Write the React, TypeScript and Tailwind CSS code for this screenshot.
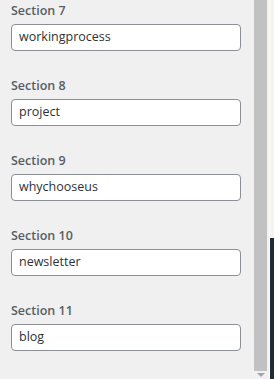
import React from "react";

const sections = [
  { label: "Section 7", value: "workingprocess" },
  { label: "Section 8", value: "project" },
  { label: "Section 9", value: "whychooseus" },
  { label: "Section 10", value: "newsletter" },
  { label: "Section 11", value: "blog" },
];

export default function App() {
  return (
    <div className="flex h-screen w-full overflow-hidden bg-[#f0f0f1]" style={{ fontFamily: '"Open Sans", "Noto Sans", sans-serif' }}>
      <div className="flex-1 pl-[11px] pr-[11px] pt-[1px]">
        {sections.map((s) => (
          <div key={s.label} className="mb-[25px]">
            <div className="h-[20px] text-[12.5px] font-semibold leading-[20px] text-[#575e65]">{s.label}</div>
            <div className="mt-[3px] flex h-[27px] w-[230px] items-center rounded-[4px] border border-[#8c8f94] bg-white pl-[7px] text-[12.5px] text-[#2c3338]">
              {s.value}
            </div>
          </div>
        ))}
      </div>
      <div className="relative flex w-[17px] flex-col bg-[#f1f1f1]">
        <div className="mx-[2px] h-[371px] bg-[#c1c1c1]" />
        <div className="flex flex-1 items-center justify-center">
          <div className="h-0 w-0 border-x-[4px] border-t-[4px] border-x-transparent border-t-[#a3a3a3]" />
        </div>
      </div>
      <div className="w-[1px] bg-[#fbfbfb]" />
      <div className="flex w-[4px] flex-col">
        <div className="h-[238px] bg-[#f6f3ee]" />
        <div className="flex-1 bg-[#1d2b36]" />
      </div>
    </div>
  );
}
